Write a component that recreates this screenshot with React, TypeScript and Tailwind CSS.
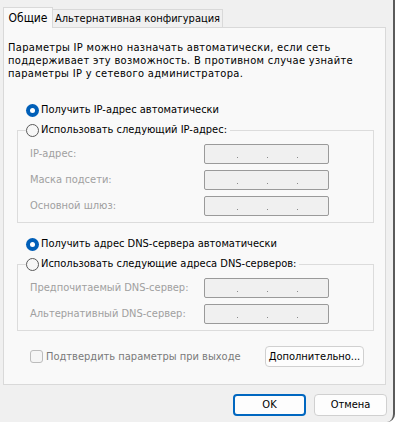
import React from "react";

const F = "font-['DejaVu_Sans_Condensed','DejaVu_Sans',sans-serif] text-[11px] leading-[14px]";

function Radio({ on }: { on?: boolean }) {
  return on ? (
    <span className="w-[13px] h-[13px] rounded-full bg-[#005fb8] flex items-center justify-center shrink-0">
      <span className="w-[5px] h-[5px] rounded-full bg-white" />
    </span>
  ) : (
    <span className="w-[13px] h-[13px] rounded-full border border-[#5a5a5a] bg-[#f7f7f7] shrink-0" />
  );
}

function IpBox() {
  return (
    <div className="w-[125px] h-[20px] rounded-[2px] border border-[#9a9a9a] bg-[#f0f0f0] flex items-end pl-[32px] pb-[5px] gap-[29px]">
      <span className="w-[1px] h-[1px] bg-[#8a8a8a]" />
      <span className="w-[1px] h-[1px] bg-[#8a8a8a]" />
      <span className="w-[1px] h-[1px] bg-[#8a8a8a]" />
    </div>
  );
}

function Field({ label }: { label: string }) {
  return (
    <div className="flex items-center h-[20px]">
      <span className="w-[186px] pl-[12px] text-[#a0a0a0]">{label}</span>
      <IpBox />
    </div>
  );
}

function Group({ legend, fields }: { legend: string; fields: string[] }) {
  return (
    <fieldset className="ml-[13px] w-[357px] border border-[#dcdcdc] pl-[8px] pr-0 pb-[6px]">
      <legend className="flex items-center gap-[2px] pr-[3px] h-[14px]">
        <Radio />
        <span className="text-black">{legend}</span>
      </legend>
      <div className="-ml-[8px] mt-[7px] flex flex-col gap-[6px]">
        {fields.map((f) => (
          <Field key={f} label={f} />
        ))}
      </div>
    </fieldset>
  );
}

export default function App() {
  return (
    <div className={`${F} w-[395px] h-[422px] bg-[#f0f0f0] text-black relative overflow-hidden border-r-[2px] border-[#5b5b5b] rounded-br-[8px]`}>
      <div className="flex items-end pl-[3px] pt-[7px] h-[27px]">
        <div className="relative z-10 -mb-px w-[50px] h-[21px] bg-[#f9f9f9] border border-b-0 border-[#d9d9d9] flex items-center justify-center text-[12px]">
          Общие
        </div>
        <div className="w-[170px] h-[18px] bg-[#f0f0f0] border border-b-0 border-l-0 border-[#d9d9d9] flex items-center justify-center">
          Альтернативная конфигурация
        </div>
      </div>
      <div className="ml-[3px] w-[383px] h-[358px] bg-[#f9f9f9] border border-[#d9d9d9]">
        <p className="mt-[13px] ml-[4px] leading-[13px] tracking-[0.32px]">
          Параметры IP можно назначать автоматически, если сеть
          <br />
          поддерживает эту возможность. В противном случае узнайте
          <br />
          параметры IP у сетевого администратора.
        </p>
        <div className="mt-[23px] ml-[22px] flex items-center gap-[2px] h-[14px]">
          <Radio on />
          <span>Получить IP-адрес автоматически</span>
        </div>
        <div className="mt-[6px]">
          <Group
            legend="Использовать следующий IP-адрес:"
            fields={["IP-адрес:", "Маска подсети:", "Основной шлюз:"]}
          />
        </div>
        <div className="mt-[14px] ml-[22px] flex items-center gap-[2px] h-[14px]">
          <Radio on />
          <span>Получить адрес DNS-сервера автоматически</span>
        </div>
        <div className="mt-[6px]">
          <Group
            legend="Использовать следующие адреса DNS-серверов:"
            fields={["Предпочитаемый DNS-сервер:", "Альтернативный DNS-сервер:"]}
          />
        </div>
        <div className="mt-[15px] flex items-center">
          <div className="ml-[26px] flex items-center gap-[3px] w-[235px]">
            <span className="w-[13px] h-[13px] rounded-[3px] border border-[#bcbcbc] bg-[#f5f5f5]" />
            <span className="text-[#7a7a7a]">Подтвердить параметры при выходе</span>
          </div>
          <button className="w-[99px] h-[21px] rounded-[4px] border border-[#d0d0d0] bg-[#fdfdfd] flex items-center justify-center">
            Дополнительно...
          </button>
        </div>
      </div>
      <div className="flex justify-end gap-[8px] pr-[6px] mt-[9px]">
        <button className="w-[73px] h-[22px] rounded-[4px] border-2 border-[#0067c0] bg-[#fdfdfd] flex items-center justify-center">
          OK
        </button>
        <button className="w-[73px] h-[22px] rounded-[4px] border border-[#d0d0d0] bg-[#fdfdfd] flex items-center justify-center">
          Отмена
        </button>
      </div>
    </div>
  );
}
